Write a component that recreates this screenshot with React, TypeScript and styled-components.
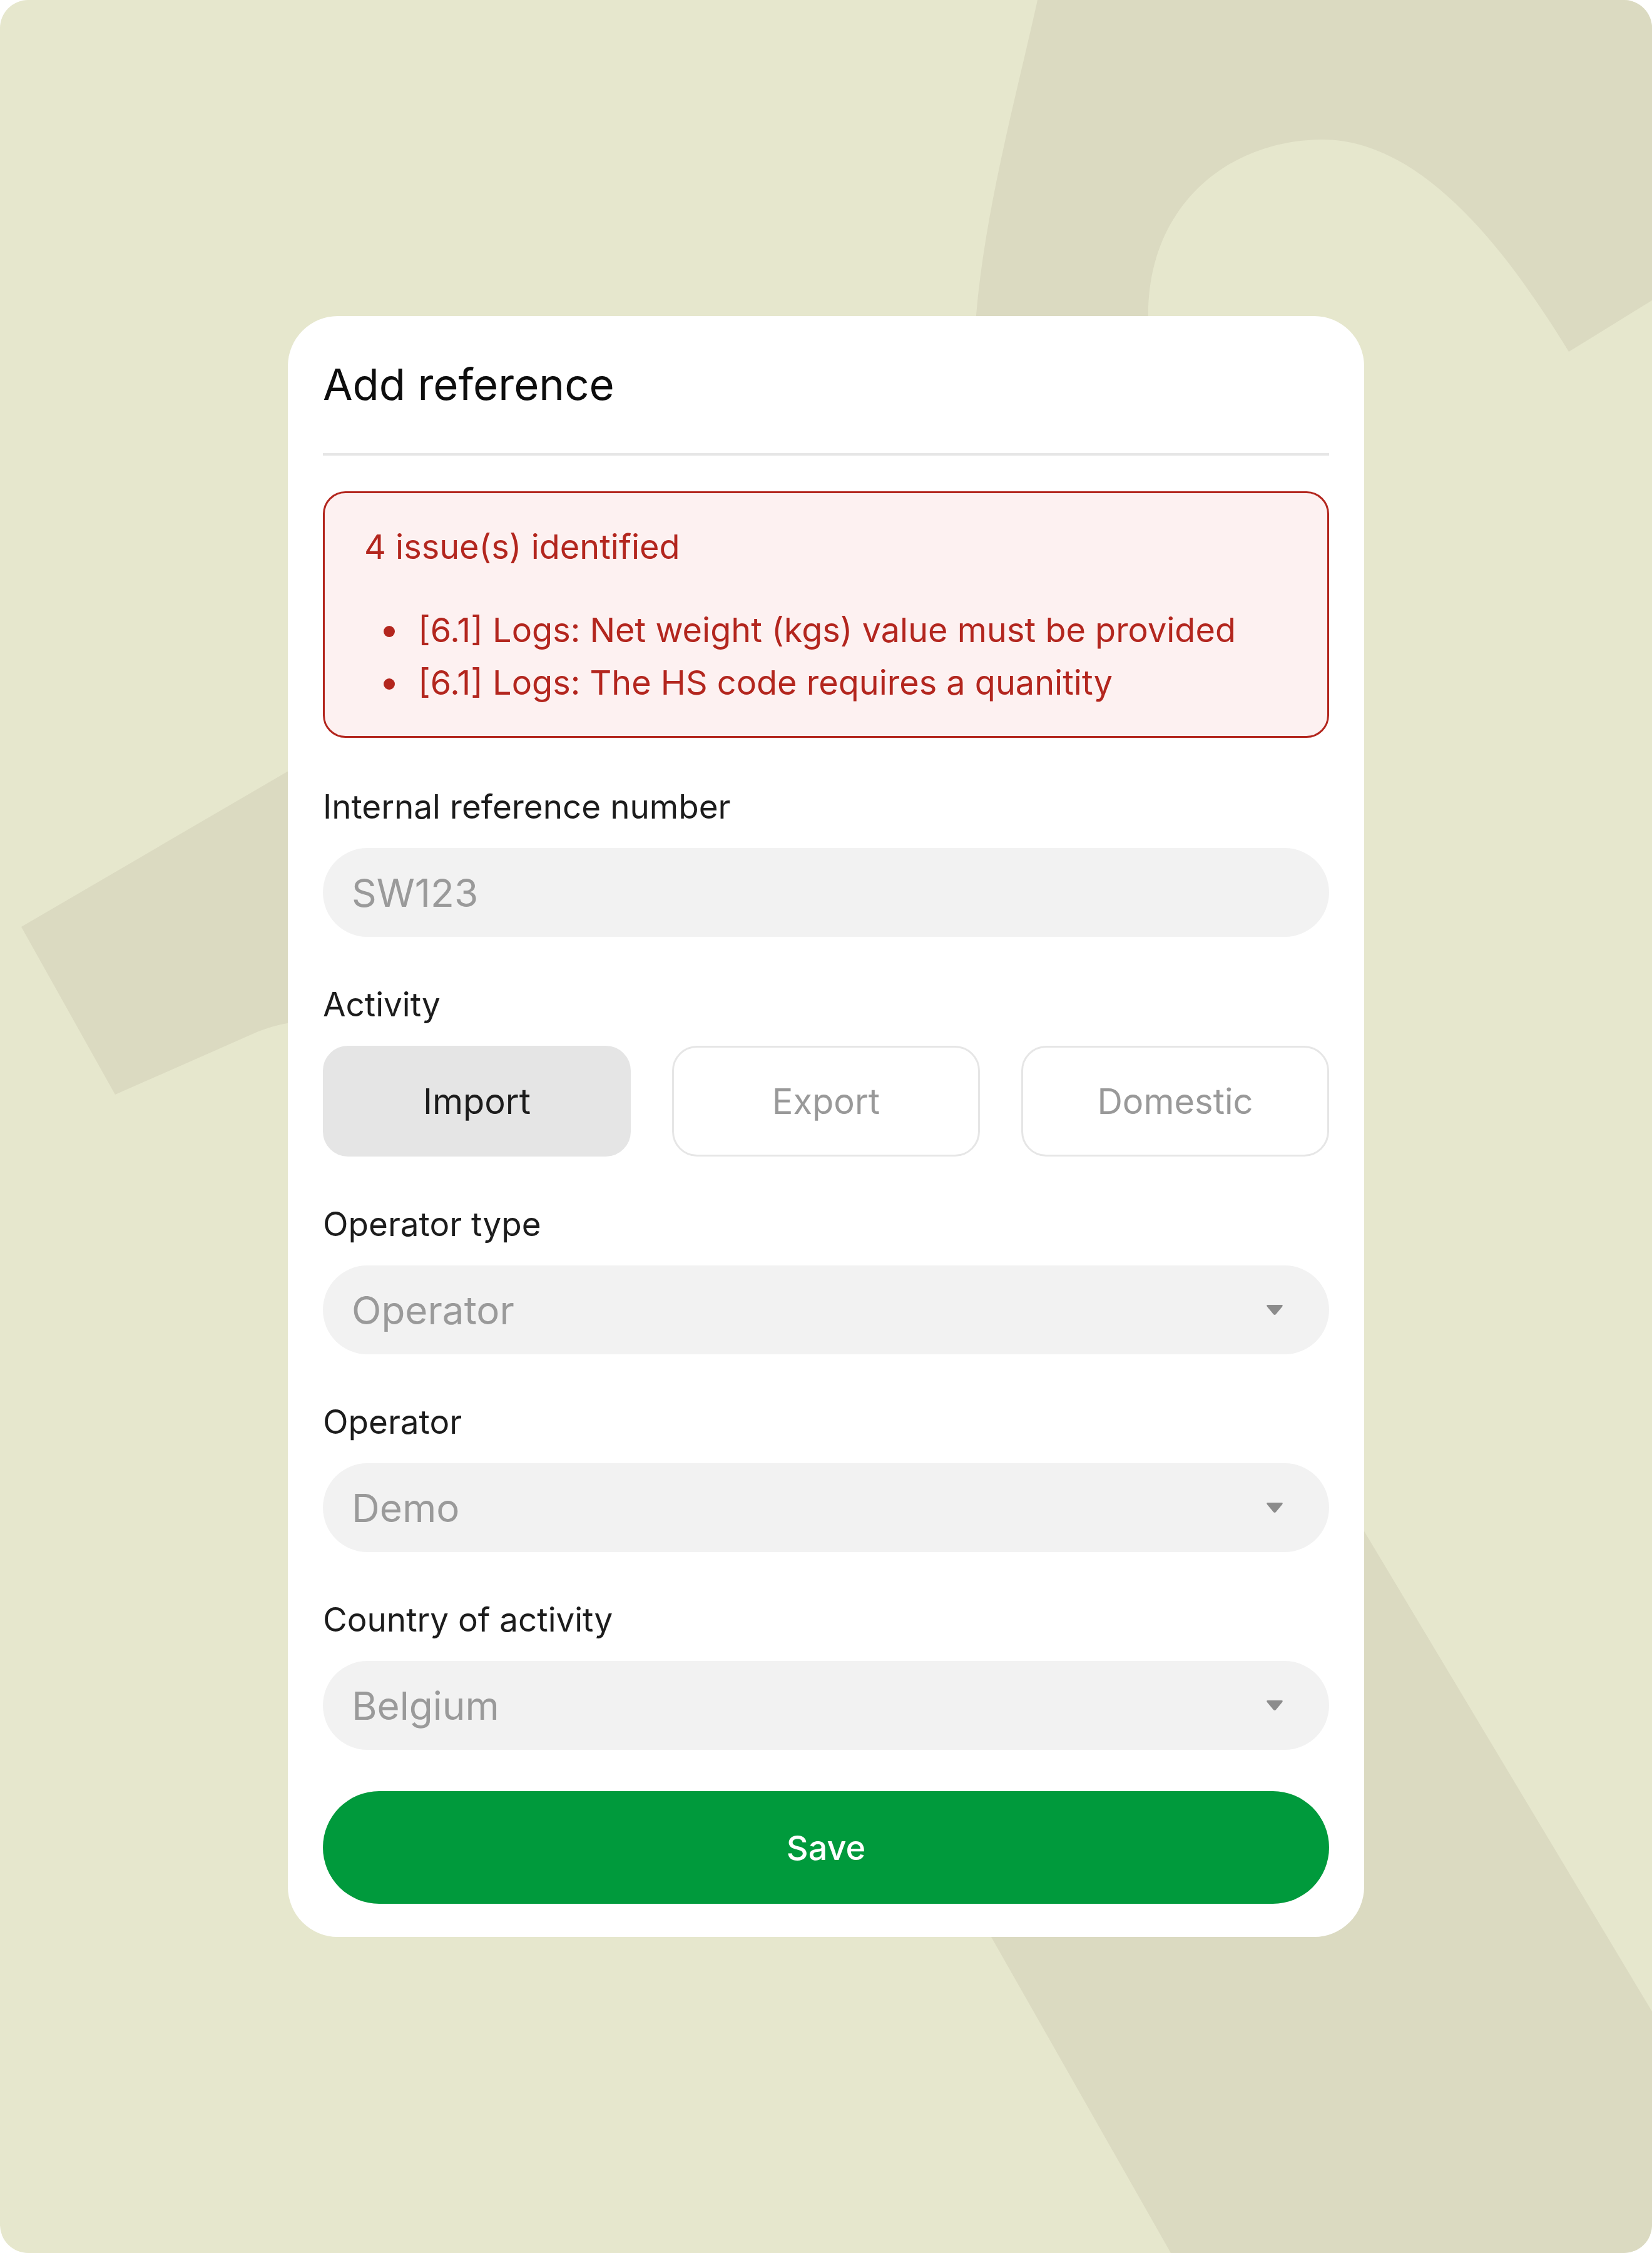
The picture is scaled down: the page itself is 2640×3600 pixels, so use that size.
import React from "react";
import styled, { createGlobalStyle } from "styled-components";

const GlobalStyle = createGlobalStyle`
  html, body {
    margin: 0;
    padding: 0;
    background: #ffffff;
  }
  * {
    box-sizing: border-box;
  }
`;

const Page = styled.div`
  position: relative;
  width: 2640px;
  height: 3600px;
  border-radius: 45px;
  overflow: hidden;
  background: #e6e7cd;
  display: flex;
  align-items: center;
  justify-content: center;
  font-family: Inter, "Noto Sans", sans-serif;
`;

const Backdrop = styled.svg`
  position: absolute;
  inset: 0;
  width: 100%;
  height: 100%;
`;

const Card = styled.div`
  position: relative;
  z-index: 1;
  width: 1720px;
  background: #ffffff;
  border-radius: 80px;
  padding: 54px 56px 53px;
`;

const Header = styled.div`
  padding-top: 12px;
  padding-bottom: 67px;
  border-bottom: 4px solid #e6e6e6;
`;

const Title = styled.h1`
  margin: 0;
  font-size: 69px;
  line-height: 86px;
  font-weight: 400;
  color: #0d0d0d;
`;

const Form = styled.div`
  margin-top: 57px;
  display: flex;
  flex-direction: column;
  gap: 80px;
`;

const ErrorBox = styled.div`
  margin-bottom: 2px;
  border: 3px solid #b3261e;
  border-radius: 36px;
  background: #fdf1f1;
  padding: 44px 63px 43px;
  color: #b3261e;
`;

const ErrorTitle = styled.p`
  margin: 0 0 49px;
  font-size: 54px;
  line-height: 84px;
`;

const ErrorList = styled.ul`
  margin: 0;
  padding: 0;
  list-style: none;
`;

const ErrorItem = styled.li`
  display: flex;
  align-items: center;
  font-size: 54px;
  line-height: 84px;

  &::before {
    content: "";
    flex: none;
    width: 18px;
    height: 18px;
    margin: 4px 37px 0 31px;
    border-radius: 50%;
    background: #b3261e;
  }
`;

const Field = styled.div`
  display: flex;
  flex-direction: column;
  gap: 38px;
`;

const Label = styled.label`
  font-size: 53px;
  line-height: 56px;
  color: #1c1c1c;
`;

const Input = styled.div`
  display: flex;
  align-items: center;
  justify-content: space-between;
  height: 142px;
  padding: 0 73px 0 46px;
  border-radius: 71px;
  background: #f2f2f2;
  font-size: 62px;
  color: #9a9a9a;
`;

const Segments = styled.div`
  display: grid;
  grid-template-columns: repeat(3, 1fr);
  gap: 66px;
`;

const Segment = styled.button<{ $active?: boolean }>`
  height: 177px;
  border-radius: 40px;
  border: 3px solid ${(p) => (p.$active ? "#e5e5e5" : "#e6e6e6")};
  background: ${(p) => (p.$active ? "#e5e5e5" : "#ffffff")};
  color: ${(p) => (p.$active ? "#1c1c1c" : "#999999")};
  font-family: inherit;
  font-size: 56px;
  padding: 0;
`;

const SaveButton = styled.button`
  margin-top: -14px;
  height: 180px;
  border: none;
  border-radius: 90px;
  background: #009a3c;
  color: #ffffff;
  font-family: inherit;
  font-size: 54px;
  font-weight: 500;
`;

const Caret = () => (
  <svg width="28" height="18" viewBox="0 0 28 18">
    <path
      d="M3 1 H25 Q28 1 26 4 L16 16 Q14 18 12 16 L2 4 Q0 1 3 1 Z"
      fill="#8c8c8c"
    />
  </svg>
);

const SelectField = ({ label, value }: { label: string; value: string }) => (
  <Field>
    <Label>{label}</Label>
    <Input>
      <span>{value}</span>
      <Caret />
    </Input>
  </Field>
);

export default function App() {
  const issues = [
    "[6.1] Logs: Net weight (kgs) value must be provided",
    "[6.1] Logs: The HS code requires a quanitity",
  ];

  return (
    <>
      <GlobalStyle />
      <Page>
        <Backdrop viewBox="0 0 2640 3600" preserveAspectRatio="none">
          <path
            fill="#dbdac1"
            d="M1658 0 L2640 0 L2640 480 L2507 562 C2420 420 2280 221 2111 223 C1960 225 1835 330 1835 503 L1835 700 L1560 700 L1560 503 C1575 330 1625 150 1658 0 Z"
          />
          <path
            fill="#dbdac1"
            d="M34 1481 L184 1749 L413 1648 Q440 1638 459 1635 L800 1560 L800 1100 L459 1233 Z"
          />
          <path
            fill="#dbdac1"
            d="M1584 3095 L1871 3600 L2640 3600 L2640 3214 L2179 2445 L1900 2000 L1300 2600 Z"
          />
        </Backdrop>

        <Card>
          <Header>
            <Title>Add reference</Title>
          </Header>

          <Form>
            <ErrorBox>
              <ErrorTitle>4 issue(s) identified</ErrorTitle>
              <ErrorList>
                {issues.map((i) => (
                  <ErrorItem key={i}>{i}</ErrorItem>
                ))}
              </ErrorList>
            </ErrorBox>

            <Field>
              <Label>Internal reference number</Label>
              <Input>SW123</Input>
            </Field>

            <Field>
              <Label>Activity</Label>
              <Segments>
                <Segment $active>Import</Segment>
                <Segment>Export</Segment>
                <Segment>Domestic</Segment>
              </Segments>
            </Field>

            <SelectField label="Operator type" value="Operator" />
            <SelectField label="Operator" value="Demo" />
            <SelectField label="Country of activity" value="Belgium" />

            <SaveButton>Save</SaveButton>
          </Form>
        </Card>
      </Page>
    </>
  );
}
